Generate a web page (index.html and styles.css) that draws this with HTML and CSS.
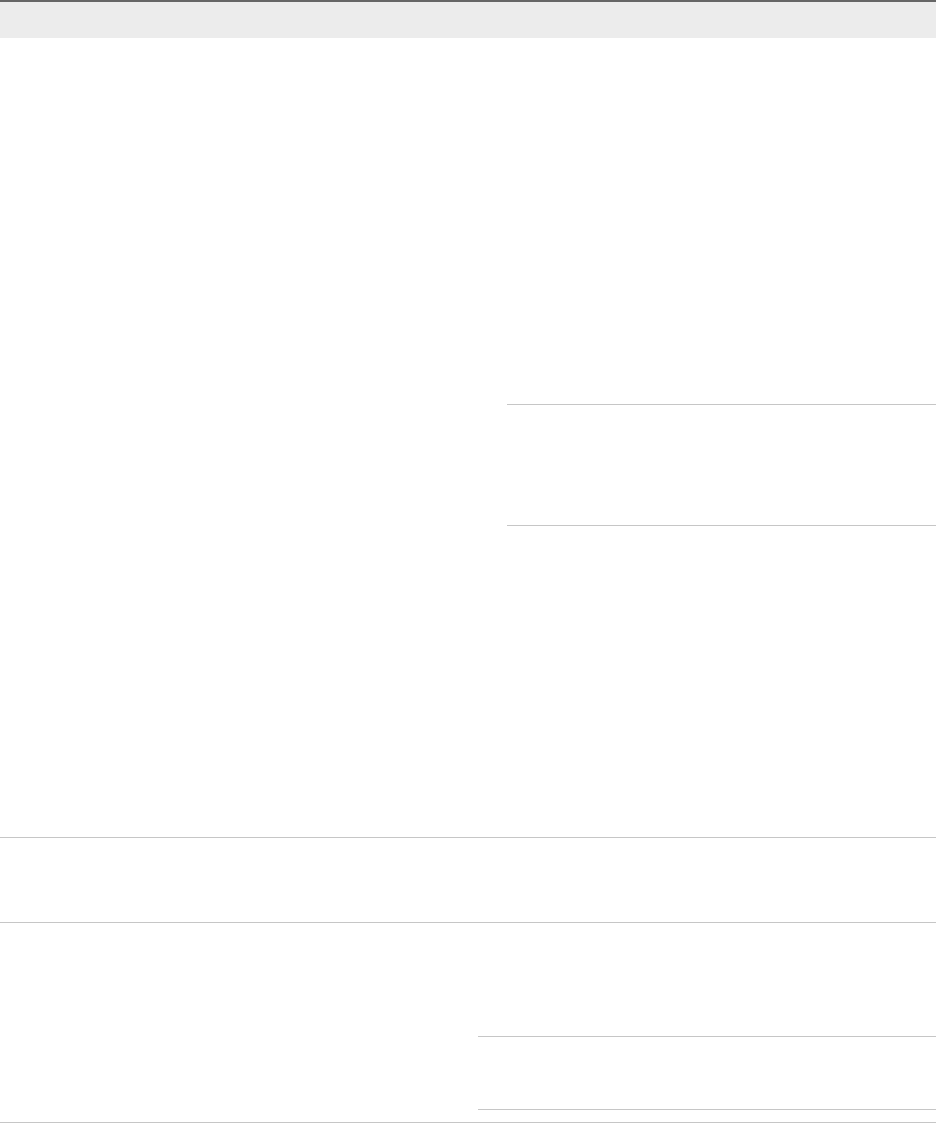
FILE: index.html
```html
<!DOCTYPE html>
<html lang="en">
<head>
<meta charset="utf-8">
<title>Table</title>
<link rel="stylesheet" href="styles.css">
</head>
<body>
<div class="table">
  <div class="thead"></div>
  <div class="row row-1">
    <div class="cell"></div>
    <div class="cell nested-wrap nested-wrap-1">
      <div class="nested nested-1"></div>
    </div>
  </div>
  <div class="row row-2">
    <div class="cell"></div>
    <div class="cell"></div>
  </div>
  <div class="row row-3">
    <div class="cell"></div>
    <div class="cell nested-wrap nested-wrap-3">
      <div class="nested nested-3"></div>
    </div>
  </div>
</div>
</body>
</html>
```
FILE: styles.css
```css
* { box-sizing: border-box; }
html, body {
  margin: 0;
  padding: 0;
  background: #ffffff;
  font-family: "Liberation Sans", Arial, sans-serif;
}
.table {
  width: 936px;
  border-top: 2px solid #666666;
}
.thead {
  height: 36px;
  background: #ececec;
}
.row {
  display: grid;
  border-bottom: 1px solid #c6c6c6;
}
.row-1 {
  grid-template-columns: 507px 1fr;
  height: 800px;
}
.row-2 {
  grid-template-columns: 478px 1fr;
  height: 85px;
}
.row-3 {
  grid-template-columns: 478px 1fr;
  height: 200px;
}
.nested {
  border-top: 1px solid #c6c6c6;
  border-bottom: 1px solid #c6c6c6;
}
.nested-1 {
  margin-top: 366px;
  height: 122px;
}
.nested-3 {
  margin-top: 113px;
  height: 74px;
}
```
